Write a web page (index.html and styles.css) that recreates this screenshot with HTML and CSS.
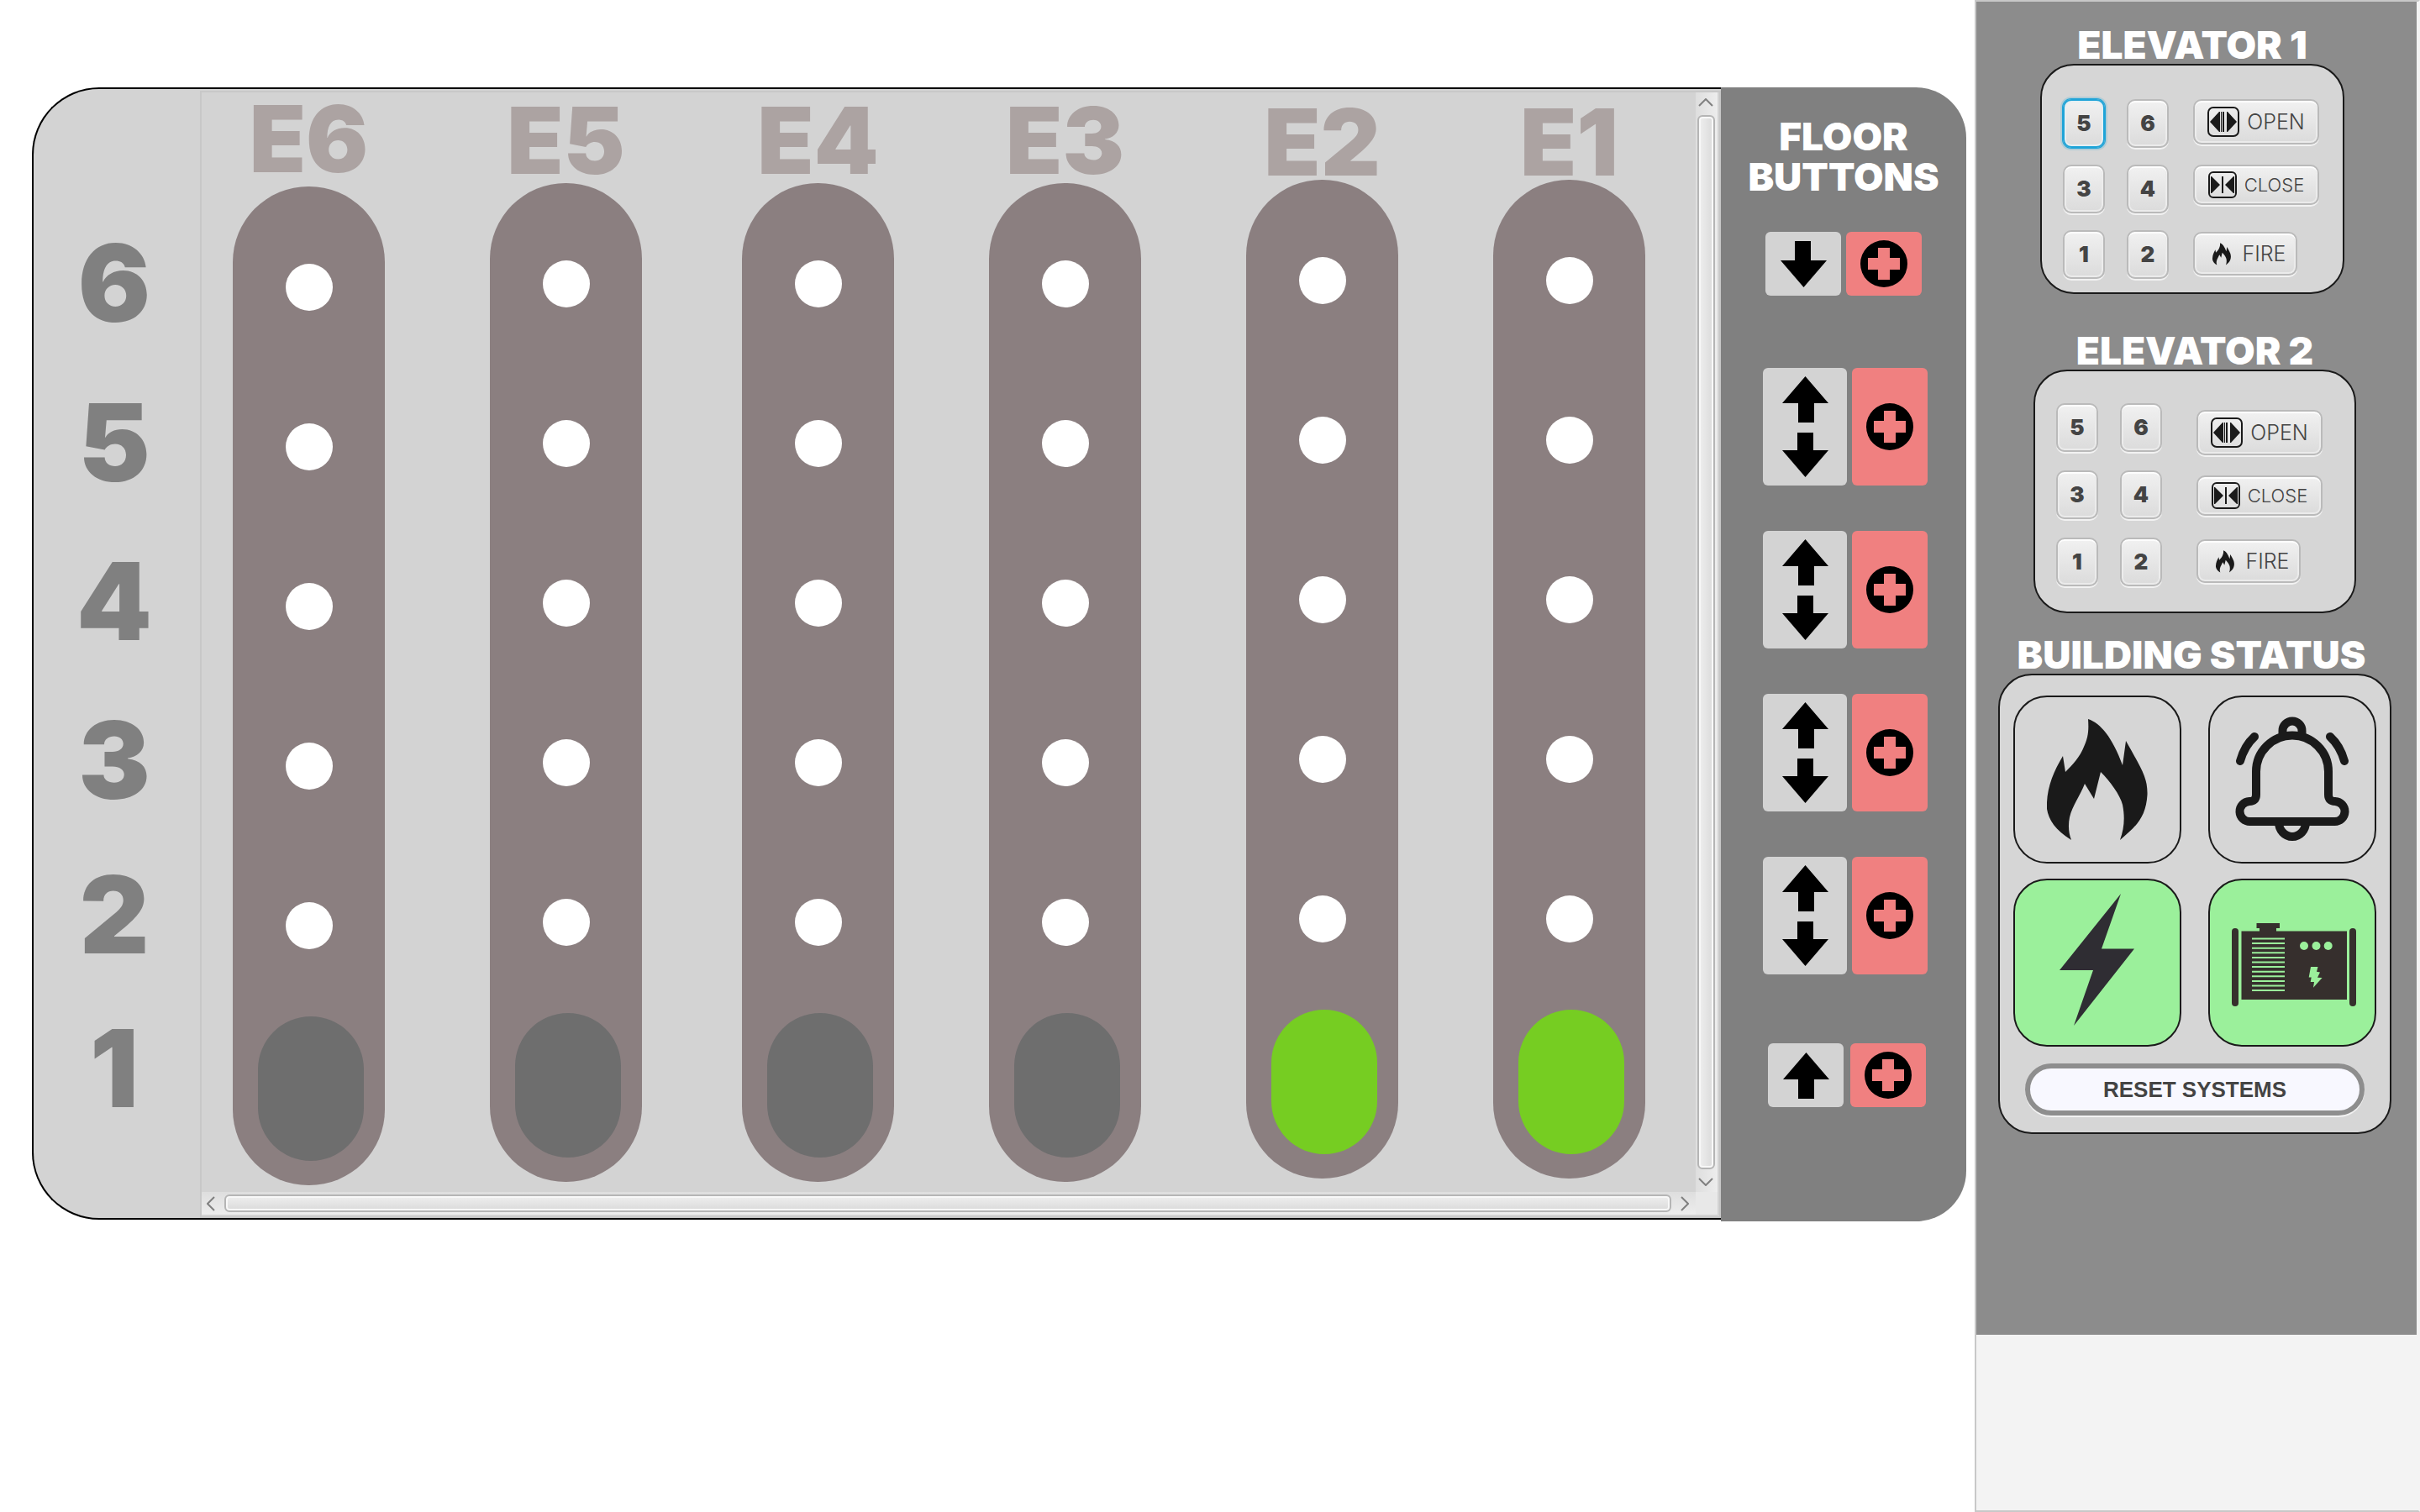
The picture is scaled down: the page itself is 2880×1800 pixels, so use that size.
FILE: index.html
```html
<!DOCTYPE html>
<html lang="en">
<head>
<meta charset="utf-8">
<title>Elevator Control</title>
<link rel="stylesheet" href="styles.css">
</head>
<body>
<svg class="defs" aria-hidden="true">
  <symbol id="arrow-up" viewBox="0 0 55 55"><path d="M27.5 0 55 32H37V55H18V32H0Z"/></symbol>
  <symbol id="arrow-down" viewBox="0 0 55 55"><path d="M27.5 55 55 23H36V0H17V23H0Z"/></symbol>
  <symbol id="arrow-both" viewBox="0 0 55 120"><path d="M27.5 0 55 32H38V55H19V32H0Z"/><path d="M27.5 120 55 88H37V67H18V88H0Z"/></symbol>
  <symbol id="cross" viewBox="0 0 56 56"><path fill-rule="evenodd" d="M28 0a28 28 0 1 1 0 56a28 28 0 1 1 0-56ZM21 9V21H9V35H21V47H35V35H47V21H35V9Z"/></symbol>
  <symbol id="open" viewBox="0 0 38 36"><rect x="1" y="1" width="36" height="34" rx="6" fill="none" stroke="#1a1a1a" stroke-width="2"/><path d="M3 18 14 6h1V30h-1ZM35 18 24 6h-1V30h1ZM16 6h1V30h-1ZM18 6h2V30h-2Z"/></symbol>
  <symbol id="close" viewBox="0 0 34 32"><rect x="1" y="1" width="32" height="30" rx="5" fill="none" stroke="#1a1a1a" stroke-width="2"/><path d="M3 6h1L14 16 4 26H3ZM31 6h-1L20 16 30 26h1ZM16 6h2V26h-2Z"/></symbol>
  <symbol id="flame" viewBox="40 28 120 145"><path d="M89 28C104 33 118 50 130 83L134 54C153 88 160 98 159.500 118C158 145 146 156 127 172C132 158 133 145 130 130C127 118 115 102 104 91L96 123 85 105C80 118 70 132 67 145C65 155 66 164 69 172C50 160 42 148 40 135C39 112 47 92 59 72L62 91C70 83 80 72 84 61C89 50 90 42 89 28Z"/></symbol>
</svg>

<main class="building">
  <section class="board">
    <ol class="floors">
      <li>6</li><li>5</li><li>4</li><li>3</li><li>2</li><li>1</li>
    </ol>
    <div class="pane">
      <div class="lifts">
        <div class="lift low"><h2>E6</h2><div class="shaft"><div class="stops"><i></i><i></i><i></i><i></i><i></i></div><div class="car"></div></div></div>
        <div class="lift mid"><h2>E5</h2><div class="shaft"><div class="stops"><i></i><i></i><i></i><i></i><i></i></div><div class="car"></div></div></div>
        <div class="lift mid"><h2>E4</h2><div class="shaft"><div class="stops"><i></i><i></i><i></i><i></i><i></i></div><div class="car"></div></div></div>
        <div class="lift mid"><h2>E3</h2><div class="shaft"><div class="stops"><i></i><i></i><i></i><i></i><i></i></div><div class="car"></div></div></div>
        <div class="lift high"><h2>E2</h2><div class="shaft"><div class="stops"><i></i><i></i><i></i><i></i><i></i></div><div class="car active"></div></div></div>
        <div class="lift high"><h2>E1</h2><div class="shaft"><div class="stops"><i></i><i></i><i></i><i></i><i></i></div><div class="car active"></div></div></div>
      </div>
      <div class="vbar">
        <svg width="18" height="10" viewBox="0 0 18 10"><path d="M1 9 9 1 17 9"/></svg>
        <div class="thumb"></div>
        <svg width="18" height="10" viewBox="0 0 18 10"><path d="M1 1 9 9 17 1"/></svg>
      </div>
      <div class="hbar">
        <svg width="10" height="18" viewBox="0 0 10 18"><path d="M9 1 1 9 9 17"/></svg>
        <div class="thumb"></div>
        <svg width="10" height="18" viewBox="0 0 10 18"><path d="M1 1 9 9 1 17"/></svg>
      </div>
    </div>
  </section>

  <section class="calls">
    <h2>FLOOR<br>BUTTONS</h2>
    <div class="call single first">
      <button class="dir" aria-label="Floor 6 down"><svg width="55" height="55"><use href="#arrow-down"/></svg></button>
      <button class="aid" aria-label="Floor 6 emergency"><svg width="56" height="56"><use href="#cross"/></svg></button>
    </div>
    <div class="call">
      <button class="dir" aria-label="Floor 5 up or down"><svg width="55" height="120"><use href="#arrow-both"/></svg></button>
      <button class="aid" aria-label="Floor 5 emergency"><svg width="56" height="56"><use href="#cross"/></svg></button>
    </div>
    <div class="call">
      <button class="dir" aria-label="Floor 4 up or down"><svg width="55" height="120"><use href="#arrow-both"/></svg></button>
      <button class="aid" aria-label="Floor 4 emergency"><svg width="56" height="56"><use href="#cross"/></svg></button>
    </div>
    <div class="call">
      <button class="dir" aria-label="Floor 3 up or down"><svg width="55" height="120"><use href="#arrow-both"/></svg></button>
      <button class="aid" aria-label="Floor 3 emergency"><svg width="56" height="56"><use href="#cross"/></svg></button>
    </div>
    <div class="call">
      <button class="dir" aria-label="Floor 2 up or down"><svg width="55" height="120"><use href="#arrow-both"/></svg></button>
      <button class="aid" aria-label="Floor 2 emergency"><svg width="56" height="56"><use href="#cross"/></svg></button>
    </div>
    <div class="call single last">
      <button class="dir" aria-label="Floor 1 up"><svg width="55" height="55"><use href="#arrow-up"/></svg></button>
      <button class="aid" aria-label="Floor 1 emergency"><svg width="56" height="56"><use href="#cross"/></svg></button>
    </div>
  </section>
</main>

<aside class="side">
  <div class="side-body">
    <section class="cab cab-one">
      <h2>ELEVATOR 1</h2>
      <div class="card">
        <div class="keys">
          <button class="key focused">5</button><button class="key">6</button>
          <button class="key">3</button><button class="key">4</button>
          <button class="key">1</button><button class="key">2</button>
        </div>
        <div class="actions">
          <button class="key open"><svg width="38" height="36"><use href="#open"/></svg>OPEN</button>
          <button class="key close"><svg width="34" height="32"><use href="#close"/></svg>CLOSE</button>
          <button class="key fire"><svg width="22" height="27"><use href="#flame"/></svg>FIRE</button>
        </div>
      </div>
    </section>

    <section class="cab cab-two">
      <h2>ELEVATOR 2</h2>
      <div class="card">
        <div class="keys">
          <button class="key">5</button><button class="key">6</button>
          <button class="key">3</button><button class="key">4</button>
          <button class="key">1</button><button class="key">2</button>
        </div>
        <div class="actions">
          <button class="key open"><svg width="38" height="36"><use href="#open"/></svg>OPEN</button>
          <button class="key close"><svg width="34" height="32"><use href="#close"/></svg>CLOSE</button>
          <button class="key fire"><svg width="22" height="27"><use href="#flame"/></svg>FIRE</button>
        </div>
      </div>
    </section>

    <section class="status">
      <h2>BUILDING STATUS</h2>
      <div class="card">
        <div class="tiles">
          <div class="tile" role="img" aria-label="Fire"><svg width="120" height="145"><use href="#flame"/></svg></div>
          <div class="tile" role="img" aria-label="Alarm"><svg width="200" height="200" viewBox="0 0 200 200"><g fill="none" stroke="#1a1a1a" stroke-width="10" stroke-linecap="round"><path d="M100 47.500A43 43 0 0 1 143 90.500V118Q143 126 151 126A12 12 0 0 1 150 150H50A12 12 0 0 1 49 126Q57 126 57 118V90.500A43 43 0 0 1 100 47.500Z"/><path stroke-linecap="butt" d="M88.500 47V42a11.500 11.500 0 0 1 23 0V47M84 151a16 17 0 0 0 32 0"/><path d="M55 49Q43 60 38 78M145 49Q157 60 162 78"/></g></svg></div>
          <div class="tile on" role="img" aria-label="Power"><svg width="200" height="200" viewBox="0 0 200 200"><path fill="#2f2d33" d="M128 18 105 83.500H144L72 175 95 109H55Z"/></svg></div>
          <div class="tile on" role="img" aria-label="Generator"><svg width="200" height="200" viewBox="0 0 200 200"><g fill="#362f2d"><rect x="28" y="59" width="8" height="93" rx="4"/><rect x="168" y="59" width="8" height="93" rx="4"/><path d="M39.500 62.500H61V59H57.500V53H85V59H81V62.500H165V144H39.500Z"/></g><path stroke="#9bf09b" stroke-width="2" d="M52 71.500H91M52 77.100H91M52 82.700H91M52 88.300H91M52 93.900H91M52 99.500H91M52 105.100H91M52 110.700H91M52 116.300H91M52 121.900H91M52 127.500H91M52 133.100H91"/><g fill="#9bf09b"><circle cx="114" cy="80" r="5"/><circle cx="128.500" cy="80" r="5"/><circle cx="142.700" cy="80" r="5"/><path d="M122 105H130.500L129 110.700 133 111.500 130 117.800 135.600 118 125 129.700 126 123H121.700L122.700 117.400H119.700Z"/></g></svg></div>
        </div>
        <button class="reset">RESET SYSTEMS</button>
      </div>
    </section>
  </div>
</aside>
</body>
</html>
```
FILE: styles.css
```css
* { box-sizing: border-box; }

body {
  margin: 0;
  min-height: 100vh;
  display: grid;
  grid-template-columns: 1fr 530px;
  background: #fff;
  font-family: Inter, "Liberation Sans", sans-serif;
}

h2, ol { margin: 0; padding: 0; }

h2 {
  font-size: 46px;
  line-height: 46px;
  font-weight: 900;
  text-align: center;
  white-space: nowrap;
  color: #fff;
}

button {
  margin: 0;
  padding: 0;
  border: 0;
  display: flex;
  align-items: center;
  justify-content: center;
  font-family: inherit;
}

svg { display: block; flex: none; }

.defs { position: absolute; width: 0; height: 0; }

/* Building board */
.building {
  display: flex;
  align-items: flex-start;
  padding: 104px 10px 0 38px;
}

.board {
  flex: 1;
  display: grid;
  grid-template-columns: 198px 1fr;
  padding-top: 2px;
  border: 2px solid #000;
  border-right: 0;
  border-radius: 80px 0 0 80px;
  background: #d3d3d3;
}

.floors {
  display: grid;
  grid-template-rows: 190px 190px 188px 190px 178px 188px;
  align-items: center;
  padding: 134px 6px 0 0;
  list-style: none;
  font-size: 128px;
  line-height: 128px;
  font-weight: 900;
  text-align: center;
  color: #808080;
}

.pane {
  display: grid;
  grid-template-columns: 1fr 26px;
  grid-template-rows: 1fr 27px;
  padding: 0 2px 2px 0;
  border: 2px solid #c8c8c8;
  background: linear-gradient(#e8e8e8, #e8e8e8) content-box #f4f4f4;
}

.lifts {
  display: grid;
  grid-template-columns: 306fr 300fr 294fr 306fr 294fr 181fr;
  padding: 0 60px 8px 37px;
  background: #d3d3d3;
}

.lift { width: 181px; }

.lift h2 {
  font-size: 110px;
  line-height: 86px;
  color: #aca3a2;
}

.low { padding-top: 12px; }
.low h2 { margin-bottom: 14px; }
.mid { padding-top: 14px; }
.mid h2 { margin-bottom: 8px; }
.high { padding-top: 16px; }
.high h2 { margin-bottom: 2px; }

.shaft {
  padding: 92px 25px 29px 30px;
  border-radius: 90px;
  background: #8b7f80;
}

.stops {
  display: flex;
  flex-direction: column;
  align-items: center;
  gap: 134px;
  padding-right: 5px;
}

.stops i {
  width: 56px;
  height: 56px;
  border-radius: 50%;
  background: #fff;
}

.car {
  height: 172px;
  margin-top: 80px;
  border-radius: 63px;
  background: #6e6e6e;
}

.car.active { background: #76cd22; }

.vbar, .hbar {
  display: flex;
  align-items: center;
  justify-content: space-between;
  fill: none;
  stroke: #808080;
  stroke-width: 2;
}

.vbar {
  flex-direction: column;
  gap: 10px;
  padding: 7px 2px 7px 0;
  background: linear-gradient(90deg, #dedede, #ededed);
}

.hbar {
  gap: 11px;
  padding: 0 8px 0 6px;
  background: linear-gradient(#dedede, #ededed);
}

.thumb {
  border: 2px solid #b5b5b5;
  border-radius: 6px;
  box-shadow: inset 0 0 0 2px #f8f8f8;
}

.vbar .thumb { flex: 1; width: 21px; background: linear-gradient(90deg, #efefef, #dadada); }
.hbar .thumb { flex: 1; height: 21px; background: linear-gradient(#efefef, #dadada); }

/* Floor call buttons */
.calls {
  width: 292px;
  padding: 34px 0 136px;
  border-radius: 0 60px 60px 0;
  background: #808080;
}

.calls h2 { line-height: 48px; margin-bottom: 42px; }

.call {
  display: flex;
  justify-content: center;
  gap: 6px;
  height: 140px;
  padding-left: 4px;
  margin-bottom: 54px;
}

.call button { width: 90px; border-radius: 6px; }
.call .dir { width: 100px; background: #d3d3d3; }
.call .aid { background: #f08080; }
.call.single { height: 76px; }
.call.single .dir { width: 90px; }
.call.first { padding: 0; margin-bottom: 86px; }
.call.last { gap: 8px; padding-left: 8px; margin: 82px 0 0; }

/* Control side panel */
.side {
  min-height: 100vh;
  border: 2px solid #c8c8c8;
  border-right-color: #f3f3f3;
  background: #f3f3f3;
}

.side-body {
  margin-right: 2px;
  padding: 28px 0 239px;
  background: #8c8c8c;
}

.card {
  border: 2px solid #1a1a1a;
  border-radius: 40px;
  background: #d6d6d6;
}

.cab-one { margin: 0 86px 44px 76px; }
.cab-two { margin: 0 72px 26px 68px; }
.status { margin: 0 30px 0 26px; }
.status h2 { padding-right: 8px; }

.cab .card { display: flex; }
.cab-one .card { gap: 29px; padding: 40px 0 16px 25px; }
.cab-two .card { gap: 41px; padding: 38px 0 30px 25px; }

.keys {
  display: grid;
  grid-template-columns: 50px 50px;
  grid-auto-rows: 58px;
  gap: 20px 26px;
}

.cab-two .keys { row-gap: 22px; }

.key {
  border: 2px solid #bababa;
  border-radius: 10px;
  background: linear-gradient(#f1f1f1, #dbdbdb);
  box-shadow: inset 0 2px 1px #fff, inset 0 0 0 2px #ebebeb, 0 2px 0 #f2f2f2;
  font-size: 26px;
  line-height: 32px;
  font-weight: 900;
  color: #444;
}

.key.focused {
  border-color: #1fa4d8;
  box-shadow: 0 0 0 1px #1fa4d8, 0 0 0 3px #b0ccd6, inset 0 0 0 2px #e4eff3;
}

.actions {
  display: flex;
  flex-direction: column;
  gap: 24px;
}

.cab-two .actions { padding-top: 8px; }

.actions .key {
  width: 150px;
  gap: 9px;
  font-size: 25px;
  font-weight: 300;
  fill: #1a1a1a;
}

.actions .open { height: 54px; }
.actions .close { height: 48px; font-size: 22px; }
.actions .fire { width: 124px; height: 52px; gap: 13px; margin-top: 8px; padding-left: 10px; }
.cab-two .actions .fire { margin-top: 4px; }

.status .card { padding: 24px 16px 20px; }

.tiles {
  display: grid;
  grid-template-columns: 200px 200px;
  grid-auto-rows: 200px;
  justify-content: space-between;
  row-gap: 18px;
  margin-bottom: 20px;
}

.tile {
  display: grid;
  place-content: center;
  border: 2px solid #1a1a1a;
  border-radius: 40px;
  fill: #1a1a1a;
}

.tile.on { background: #9bf09b; }

.reset {
  width: 404px;
  height: 62px;
  margin: 0 auto;
  border: 6px solid #8e8e8e;
  border-radius: 31px;
  background: #f8f8ff;
  box-shadow: 0 2px 0 #f2f2f2;
  font: 700 26px/30px "Liberation Sans", sans-serif;
  color: #444;
}
```
